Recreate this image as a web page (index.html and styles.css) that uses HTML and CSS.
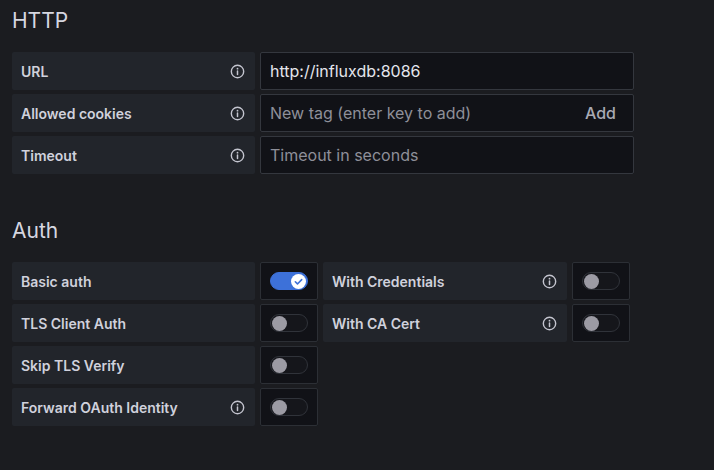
FILE: index.html
```html
<!DOCTYPE html>
<html>
<head>
<meta charset="utf-8">
<link rel="stylesheet" href="styles.css">
</head>
<body>
<svg width="0" height="0" class="defs">
  <symbol id="info" viewBox="0 0 16 16">
    <circle cx="8" cy="8" r="6.6" fill="none" stroke="currentColor" stroke-width="1.5"/>
    <line x1="8" y1="7.4" x2="8" y2="11.2" stroke="currentColor" stroke-width="1.6" stroke-linecap="round"/>
    <circle cx="8" cy="5" r="0.95" fill="currentColor"/>
  </symbol>
</svg>
<main class="page">
  <h2 class="heading">HTTP</h2>
  <div class="rows">
    <div class="row">
      <div class="label"><span>URL</span><svg class="info"><use href="#info"/></svg></div>
      <div class="input"><span class="value">http://influxdb:8086</span></div>
    </div>
    <div class="row">
      <div class="label"><span>Allowed cookies</span><svg class="info"><use href="#info"/></svg></div>
      <div class="input"><span class="placeholder">New tag (enter key to add)</span><span class="add">Add</span></div>
    </div>
    <div class="row">
      <div class="label"><span>Timeout</span><svg class="info"><use href="#info"/></svg></div>
      <div class="input"><span class="placeholder">Timeout in seconds</span></div>
    </div>
  </div>

  <h2 class="heading auth">Auth</h2>
  <div class="rows">
    <div class="row">
      <div class="label"><span>Basic auth</span></div>
      <div class="switchbox"><span class="toggle on"><span class="knob"><svg viewBox="0 0 16 16"><path d="M4.6 8.3l2.3 2.3 4.5-4.6" fill="none" stroke="#3d71d9" stroke-width="1.7" stroke-linecap="round" stroke-linejoin="round"/></svg></span></span></div>
      <div class="label label-right"><span>With Credentials</span><svg class="info"><use href="#info"/></svg></div>
      <div class="switchbox"><span class="toggle"><span class="knob"></span></span></div>
    </div>
    <div class="row">
      <div class="label"><span>TLS Client Auth</span></div>
      <div class="switchbox"><span class="toggle"><span class="knob"></span></span></div>
      <div class="label label-right"><span>With CA Cert</span><svg class="info"><use href="#info"/></svg></div>
      <div class="switchbox"><span class="toggle"><span class="knob"></span></span></div>
    </div>
    <div class="row">
      <div class="label"><span>Skip TLS Verify</span></div>
      <div class="switchbox"><span class="toggle"><span class="knob"></span></span></div>
    </div>
    <div class="row">
      <div class="label"><span>Forward OAuth Identity</span><svg class="info"><use href="#info"/></svg></div>
      <div class="switchbox"><span class="toggle"><span class="knob"></span></span></div>
    </div>
  </div>
</main>
</body>
</html>
```
FILE: styles.css
```css
html, body {
  margin: 0;
  padding: 0;
  background: #1b1c20;
}
.defs { position: absolute; }
.page {
  padding: 8px 0 0 12px;
  font-family: Inter, "Noto Sans", sans-serif;
  color: #d0d1dc;
}
.heading {
  margin: 0 0 18px 0;
  font-size: 21px;
  line-height: 26px;
  font-weight: 400;
  color: #d6d7e0;
}
.heading.auth {
  margin-top: 44px;
}
.rows {
  display: flex;
  flex-direction: column;
  gap: 4px;
}
.row {
  display: flex;
  gap: 5px;
  height: 38px;
}
.label {
  width: 243px;
  box-sizing: border-box;
  background: #22252b;
  border-radius: 2px;
  padding: 0 10px 0 9px;
  display: flex;
  align-items: center;
  justify-content: space-between;
  font-size: 14px;
  font-weight: 600;
  color: #d0d1dc;
}
.label-right {
  width: 244px;
}
.info {
  width: 15px;
  height: 15px;
  color: #c4c5cf;
}
.input {
  width: 374px;
  box-sizing: border-box;
  background: #111217;
  border: 1px solid #34373e;
  border-radius: 2px;
  display: flex;
  align-items: center;
  justify-content: space-between;
  padding: 0 17px 0 9px;
  font-size: 16px;
}
.value { color: #e4e5ec; }
.placeholder { color: #8e8f99; }
.add {
  color: #a9aab4;
  font-weight: 500;
}
.switchbox {
  width: 58px;
  box-sizing: border-box;
  background: #111217;
  border: 1px solid #2c2f35;
  border-radius: 2px;
  display: flex;
  align-items: center;
  justify-content: center;
}
.toggle {
  width: 38px;
  height: 18px;
  box-sizing: border-box;
  border-radius: 10px;
  background: #15161b;
  border: 1px solid #30333a;
  display: flex;
  align-items: center;
  padding: 0 1px;
}
.knob {
  width: 15px;
  height: 15px;
  border-radius: 50%;
  background: #9c9ba4;
  display: flex;
}
.knob svg { width: 15px; height: 15px; }
.toggle.on {
  background: #3d71d9;
  border-color: #3d71d9;
  justify-content: flex-end;
}
.toggle.on .knob { background: #ffffff; }
```
